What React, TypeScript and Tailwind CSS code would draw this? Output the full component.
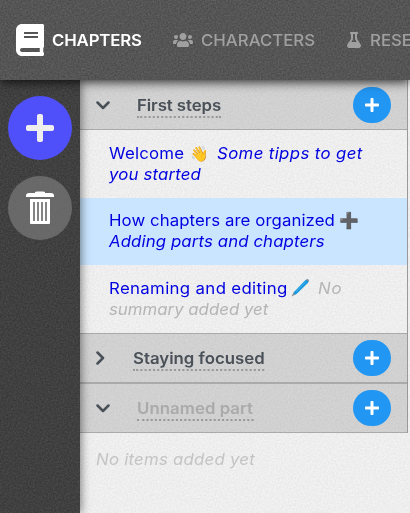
import React from "react";
import { FaBook, FaUsers, FaFlask, FaPlus } from "react-icons/fa";

function Grain({ id, opacity }: { id: string; opacity: number }) {
  return (
    <svg className="pointer-events-none absolute inset-0 h-full w-full" opacity={opacity} aria-hidden="true">
      <filter id={id} x="0" y="0" width="100%" height="100%" colorInterpolationFilters="sRGB">
        <feTurbulence type="fractalNoise" baseFrequency="0.6" numOctaves="3" />
        <feColorMatrix values="1.6 0 0 0 -0.3 1.6 0 0 0 -0.3 1.6 0 0 0 -0.3 0 0 0 0 1" />
      </filter>
      <rect width="100%" height="100%" filter={`url(#${id})`} />
    </svg>
  );
}

function Chevron({ open }: { open: boolean }) {
  return open ? (
    <svg className="mt-px h-[9px] w-[14px]" viewBox="0 0 14 9" fill="none" stroke="#495057" strokeWidth="2.5" strokeLinecap="round" strokeLinejoin="round">
      <path d="M1.500 1.500 7 7l5.500-5.500" />
    </svg>
  ) : (
    <svg className="h-[14px] w-[9px]" viewBox="0 0 9 14" fill="none" stroke="#495057" strokeWidth="2.5" strokeLinecap="round" strokeLinejoin="round">
      <path d="M1.500 1.500 7 7l-5.500 5.500" />
    </svg>
  );
}

function PartHeader({ children, open, titleClass, height }: { children: React.ReactNode; open: boolean; titleClass: string; height: string }) {
  return (
    <div className={`flex items-center bg-black/12 px-4 ${height}`}>
      <Chevron open={open} />
      <span className={`mt-[3px] h-[23px] origin-left scale-x-105 border-b-2 border-dotted border-[#999] font-semibold ${titleClass}`}>
        {children}
      </span>
      <button className="ml-auto flex h-9 w-[38px] items-center justify-center rounded-full bg-[#2196f3] text-white">
        <FaPlus className="h-4 w-4" />
      </button>
    </div>
  );
}

function Trash() {
  return (
    <svg className="h-[34px] w-7" viewBox="0 0 28 34" fill="white">
      <path d="M0 6V4.500Q0 2 3 2h6V1l2-.500h6l2 .5v1h6q3 0 3 2.500V6ZM4 8h20v24q0 1-1 1H5q-1 0-1-1Z" />
      <path d="M8 11v19M12 11v19M16 11v19M20 11v19" stroke="#666" strokeWidth="1.600" />
    </svg>
  );
}

function Pen() {
  return (
    <svg className="ml-[3px] inline-block h-[18px] w-[19px] align-[-3px]" viewBox="0 0 19 18">
      <path d="m.5 17.500 2-4 2 2Z" fill="#8a8f94" />
      <path d="m2.500 13.500 11.500-12Q16 0 17.300 1q.9 1-.3 2.800L5.500 15 4 15.800Z" fill="#1496dc" />
      <path d="m5 12.700 10-10" stroke="#35adea" strokeWidth="1.200" />
      <path d="m15 .800 2-.700 1.200 1.100-.7 1.600Z" fill="#8a9298" />
    </svg>
  );
}

export default function App() {
  return (
    <div className="relative h-[513px] w-[410px] overflow-hidden bg-[#f5f5f5] font-['Inter','Noto_Color_Emoji',sans-serif]">
      <header className="relative z-20 h-20 bg-[#515151] shadow-[0_2px_10px_rgba(0,0,0,0.8)]">
        <Grain id="grain-header" opacity={0.09} />
        <nav className="relative flex h-20 items-center overflow-hidden text-[16px] leading-5 font-medium whitespace-nowrap text-[#a0a0a0]">
          <FaBook className="ml-4 h-8 w-7 shrink-0 text-white" />
          <span className="ml-2 w-[89px] shrink-0 origin-left scale-x-105 font-semibold tracking-[-0.15px] text-white">CHAPTERS</span>
          <FaUsers className="ml-8 h-4 w-5 shrink-0" />
          <span className="ml-2 w-[114px] shrink-0 origin-left scale-x-105">CHARACTERS</span>
          <FaFlask className="ml-8 h-4 w-[14px] shrink-0" />
          <span className="ml-[9px] shrink-0 origin-left scale-x-105">RESEARCH</span>
        </nav>
      </header>
      <div className="flex h-[433px]">
        <aside className="relative z-10 w-20 shrink-0 bg-[#3b3b3b] shadow-[1px_0_9px_rgba(0,0,0,0.5)]">
          <Grain id="grain-side" opacity={0.08} />
          <div className="relative flex flex-col items-center gap-4 pt-4">
            <button className="flex h-16 w-16 items-center justify-center rounded-full bg-[#5050fa] text-[#eee]">
              <FaPlus className="h-8 w-8" />
            </button>
            <button className="flex h-16 w-16 items-center justify-center rounded-full bg-[#777]/75">
              <Trash />
            </button>
          </div>
        </aside>
        <main className="relative grow">
          <Grain id="grain-main" opacity={0.05} />
          <div className="relative w-[328px] border-r border-[#999] text-[16px] leading-[21px] whitespace-nowrap text-[#0000e0]">
            <div className="border-b border-[#aaa]">
              <PartHeader open height="h-[49px]" titleClass="ml-[27px] tracking-[-0.08px] text-[#495057]">First steps</PartHeader>
            </div>
            <div className="h-[68px] pt-[13px] pl-[29px]">
              <div className="flex">
                <span className="w-[81px] origin-left scale-x-105 tracking-[0.2px]">Welcome</span>
                <span className="w-[27px] text-[15px]">👋</span>
                <i className="origin-left scale-x-105 tracking-[0.35px]">Some tipps to get</i>
              </div>
              <div className="origin-left scale-x-105 tracking-[0.15px] italic">you started</div>
            </div>
            <div className="h-[67px] bg-[#cae5ff] pt-3 pl-[29px]">
              <div className="flex">
                <span className="w-[230px] origin-left scale-x-105 tracking-[0.07px]">How chapters are organized</span>
                <span>➕</span>
              </div>
              <div className="origin-left scale-x-105 tracking-[0.1px] italic">Adding parts and chapters</div>
            </div>
            <div className="h-[68px] pt-[13px] pl-[29px]">
              <div className="flex">
                <span className="w-[179px] origin-left scale-x-105 tracking-[0.33px]">Renaming and editing</span>
                <span className="w-[30px]"><Pen /></span>
                <i className="origin-left scale-x-105 tracking-[0.8px] text-[#b5b5b5]">No</i>
              </div>
              <div className="origin-left scale-x-105 text-[#b5b5b5] italic">summary added yet</div>
            </div>
            <div className="border-y border-[#aaa]">
              <PartHeader open={false} height="h-12" titleClass="ml-7 text-[#495057]">Staying focused</PartHeader>
            </div>
            <div className="border-y border-[#aaa]">
              <PartHeader open height="h-12" titleClass="ml-[27px] tracking-[0.04px] text-[#aaa]">Unnamed part</PartHeader>
            </div>
          </div>
          <div className="relative mt-4 ml-4 origin-left scale-x-105 text-[16px] leading-[21px] tracking-[0.22px] whitespace-nowrap text-[#c4c4c4] italic">No items added yet</div>
        </main>
      </div>
    </div>
  );
}
